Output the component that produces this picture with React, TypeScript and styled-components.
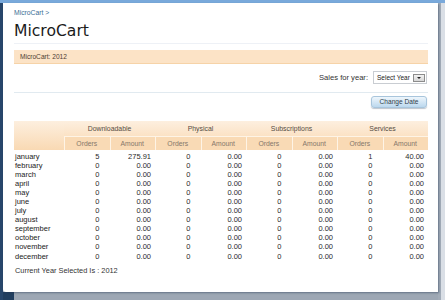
import React from "react";
import styled, { createGlobalStyle } from "styled-components";

const GlobalStyle = createGlobalStyle`
  html, body {
    margin: 0;
    padding: 0;
    background: #a9b3c0;
  }
  body {
    font-family: "Liberation Sans", Arial, sans-serif;
    color: #333;
  }
`;

const Frame = styled.div`
  width: 445px;
  height: 300px;
  display: flex;
  flex-direction: column;
  overflow: hidden;
`;

const TopStrip = styled.div`
  height: 3px;
  flex: none;
  background: #79a9db;
`;

const Body = styled.div`
  flex: 1;
  display: flex;
`;

const SideStrip = styled.div`
  width: 3px;
  flex: none;
  background: #27466b;
`;

const Column = styled.div`
  width: 435px;
  flex: none;
  display: flex;
  flex-direction: column;
`;

const RightEdge = styled.div`
  flex: 1;
  background: linear-gradient(90deg, #a2acb8 0 3px, #dadfe6 3px);
`;

const BottomGutter = styled.div`
  flex: 1;
  background: linear-gradient(90deg, #213e5f 0 11px, #9da7b4 11px);
`;

const Panel = styled.div`
  height: 289px;
  flex: none;
  box-sizing: border-box;
  background: #fff;
  padding: 5px 10px 0 11px;
  border-bottom-left-radius: 3px;
  box-shadow: 1px 1px 2px rgba(30, 50, 80, 0.45);
  position: relative;
  z-index: 1;
`;

const Breadcrumb = styled.div`
  height: 10px;
  line-height: 10px;
  font-size: 6.8px;
  color: #3b6e95;
`;

const Title = styled.h1`
  margin: 4px 0 0;
  height: 18px;
  line-height: 18px;
  font-family: "DejaVu Sans", Verdana, sans-serif;
  font-size: 15.6px;
  font-weight: normal;
  color: #1b1b1b;
`;

const Rule = styled.div<{ $top: number; $color: string }>`
  margin-top: ${(p) => p.$top}px;
  height: 1px;
  background: ${(p) => p.$color};
`;

const InfoBar = styled.div`
  margin-top: 6px;
  height: 13px;
  line-height: 13px;
  padding-left: 6px;
  font-size: 6.6px;
  color: #4f4033;
  background: #fce3c6;
  border-bottom: 1px solid #f6d3a8;
`;

const SalesRow = styled.div`
  margin-top: 6px;
  height: 15px;
  display: flex;
  align-items: center;
  justify-content: flex-end;
  gap: 5px;
  padding-right: 1px;
  font-size: 7.6px;
  color: #333;
`;

const Select = styled.div`
  width: 54px;
  height: 13px;
  box-sizing: border-box;
  border: 1px solid #c9cdd2;
  background: #fff;
  display: flex;
  align-items: center;
  justify-content: space-between;
  padding: 0 1px 0 3px;
  font-size: 6.5px;
  color: #222;
`;

const SelectArrow = styled.span`
  width: 12px;
  height: 8px;
  box-sizing: border-box;
  border: 1px solid #8c8c8c;
  background: linear-gradient(#f2f2f2, #d6d6d6);
  display: flex;
  align-items: center;
  justify-content: center;
  &::after {
    content: "";
    border-left: 2px solid transparent;
    border-right: 2px solid transparent;
    border-top: 2px solid #222;
  }
`;

const ButtonRow = styled.div`
  margin-top: 3px;
  display: flex;
  justify-content: flex-end;
  padding-right: 1px;
`;

const Button = styled.button`
  width: 56px;
  height: 12px;
  padding: 0;
  border: 1px solid #a8c5dc;
  border-radius: 3px;
  background: linear-gradient(#eef6fc, #bcd8ee);
  box-shadow: 0 1px 1px rgba(40, 60, 90, 0.3);
  font-family: "Liberation Sans", Arial, sans-serif;
  font-size: 6.6px;
  line-height: 10px;
  color: #2f3d4b;
`;

const Table = styled.table`
  margin-top: 13px;
  width: 414px;
  table-layout: fixed;
  border-collapse: collapse;
  border-spacing: 0;
`;

const MonthHead = styled.th`
  background: linear-gradient(#fdefdf, #f9d9b3);
`;

const GroupHead = styled.th`
  height: 15px;
  padding: 0;
  font-size: 6.9px;
  font-weight: normal;
  color: #554c43;
  background: linear-gradient(#fdefdf, #fbe2c5);
`;

const SubHead = styled.th`
  height: 14px;
  padding: 0;
  font-size: 6.8px;
  font-weight: normal;
  color: #85776a;
  background: #f9dab5;
  box-shadow: inset 1px 1px 0 rgba(255, 250, 242, 0.8);
`;

const Cell = styled.td<{ $pad: number; $first?: boolean }>`
  padding: ${(p) => (p.$first ? 1.5 : 0)}px ${(p) => p.$pad}px 0 0;
  line-height: 9.1px;
  font-size: 7.5px;
  color: #2b2b2b;
  text-align: right;
  white-space: nowrap;
`;

const MonthCell = styled.td<{ $first?: boolean }>`
  padding: ${(p) => (p.$first ? 1.5 : 0)}px 0 0 1px;
  line-height: 9.1px;
  font-size: 7.5px;
  color: #222;
  text-align: left;
`;

const Footer = styled.div`
  margin-top: 5.5px;
  line-height: 10px;
  padding-left: 1px;
  font-size: 7.4px;
  color: #333;
`;

const months = [
  "january",
  "february",
  "march",
  "april",
  "may",
  "june",
  "july",
  "august",
  "september",
  "october",
  "november",
  "december",
];

const groups = ["Downloadable", "Physical", "Subscriptions", "Services"];

function rowFor(i: number): string[] {
  if (i === 0) return ["5", "275.91", "0", "0.00", "0", "0.00", "1", "40.00"];
  return ["0", "0.00", "0", "0.00", "0", "0.00", "0", "0.00"];
}

export default function App() {
  return (
    <>
      <GlobalStyle />
      <Frame>
        <TopStrip />
        <Body>
          <SideStrip />
          <Column>
            <Panel>
              <Breadcrumb>MicroCart &gt;</Breadcrumb>
              <Title>MicroCart</Title>
              <Rule $top={3} $color="#eef1f6" />
              <InfoBar>MicroCart: 2012</InfoBar>
              <SalesRow>
                <span>Sales for year:</span>
                <Select>
                  <span>Select Year</span>
                  <SelectArrow />
                </Select>
              </SalesRow>
              <Rule $top={7} $color="#e1eaf0" />
              <ButtonRow>
                <Button>Change Date</Button>
              </ButtonRow>
              <Table>
                <colgroup>
                  <col style={{ width: 50 }} />
                  {Array.from({ length: 8 }).map((_, i) => (
                    <col key={i} style={{ width: 45.5 }} />
                  ))}
                </colgroup>
                <thead>
                  <tr>
                    <MonthHead rowSpan={2} />
                    {groups.map((g) => (
                      <GroupHead key={g} colSpan={2}>
                        {g}
                      </GroupHead>
                    ))}
                  </tr>
                  <tr>
                    {groups.map((g) => (
                      <React.Fragment key={g}>
                        <SubHead>Orders</SubHead>
                        <SubHead>Amount</SubHead>
                      </React.Fragment>
                    ))}
                  </tr>
                </thead>
                <tbody>
                  {months.map((m, i) => (
                    <tr key={m}>
                      <MonthCell $first={i === 0}>{m}</MonthCell>
                      {rowFor(i).map((v, j) => (
                        <Cell key={j} $first={i === 0} $pad={j % 2 === 0 ? 10 : 4}>
                          {v}
                        </Cell>
                      ))}
                    </tr>
                  ))}
                </tbody>
              </Table>
              <Footer>Current Year Selected Is : 2012</Footer>
            </Panel>
            <BottomGutter />
          </Column>
          <RightEdge />
        </Body>
      </Frame>
    </>
  );
}
